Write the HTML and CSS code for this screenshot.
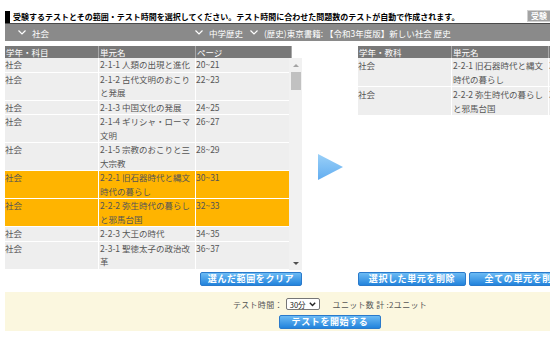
FILE: index.html
```html
<!DOCTYPE html>
<html lang="ja">
<head>
  <meta charset="UTF-8">
  <title>テスト作成</title>
  <link rel="stylesheet" href="styles.css">
</head>
<body>

  <div class="page">

    <div class="notice">
      <p>受験するテストとその範囲・テスト時間を選択してください。テスト時間に合わせた問題数のテストが自動で作成されます。</p>
      <button class="history-btn">受験</button>
    </div>

    <div class="filter-bar">
      <span class="filter filter-subject">
        <svg width="8" height="5" viewBox="0 0 8 5"><polyline points="0.5,0.5 4,4 7.5,0.5" fill="none" stroke="#fff" stroke-width="1.2"/></svg>
        社会
      </span>
      <span class="filter filter-grade">
        <svg width="8" height="5" viewBox="0 0 8 5"><polyline points="0.5,0.5 4,4 7.5,0.5" fill="none" stroke="#fff" stroke-width="1.2"/></svg>
        中学歴史
      </span>
      <span class="filter">
        <svg width="8" height="5" viewBox="0 0 8 5"><polyline points="0.5,0.5 4,4 7.5,0.5" fill="none" stroke="#fff" stroke-width="1.2"/></svg>
        (歴史)東京書籍: 【令和3年度版】新しい社会 歴史
      </span>
    </div>

    <div class="picker">

      <div class="panel">
        <div class="thead">
          <span class="c1">学年・科目</span>
          <span class="c2">単元名</span>
          <span class="c3">ページ</span>
        </div>
        <div class="scroll-box">
          <div class="rows" id="unit-list"></div>
          <div class="scrollbar">
            <div class="sb-up"><i></i></div>
            <div class="sb-thumb"></div>
            <div class="sb-down"><i></i></div>
          </div>
        </div>
        <div class="actions actions-right">
          <button class="blue-btn clear-btn">選んだ範囲をクリア</button>
        </div>
      </div>

      <div class="arrow">
        <svg width="27" height="26" viewBox="0 0 27 26">
          <defs>
            <linearGradient id="arrowFill" x1="0" y1="0" x2="0" y2="1">
              <stop offset="0" stop-color="#9ad0f8"/>
              <stop offset="1" stop-color="#62adf0"/>
            </linearGradient>
          </defs>
          <polygon points="1,0 26,13 1,26" fill="url(#arrowFill)"/>
        </svg>
      </div>

      <div class="panel">
        <div class="thead thead-wide">
          <span class="c1">学年・教科</span>
          <span class="c2">単元名</span>
          <span class="c3">ページ</span>
        </div>
        <div class="scroll-box">
          <div class="rows selected" id="selected-list"></div>
        </div>
        <div class="actions">
          <button class="blue-btn remove-btn">選択した単元を削除</button>
          <button class="blue-btn remove-btn">全ての単元を削除</button>
        </div>
      </div>

    </div>

    <div class="start-box">
      <div class="start-row">
        <span>テスト時間：</span>
        <span class="time-select">30分
          <svg width="7" height="5" viewBox="0 0 7 5"><polyline points="0.8,0.8 3.5,3.5 6.2,0.8" fill="none" stroke="#222" stroke-width="1.4"/></svg>
        </span>
        <span>ユニット数 計 :2ユニット</span>
      </div>
      <button class="blue-btn start-btn">テストを開始する</button>
    </div>

  </div>

  <script>
    const units = [
      { subject: '社会', name: '2-1-1 人類の出現と進化', page: '20~21' },
      { subject: '社会', name: '2-1-2 古代文明のおこりと発展', page: '22~23' },
      { subject: '社会', name: '2-1-3 中国文化の発展', page: '24~25' },
      { subject: '社会', name: '2-1-4 ギリシャ・ローマ文明', page: '26~27' },
      { subject: '社会', name: '2-1-5 宗教のおこりと三大宗教', page: '28~29' },
      { subject: '社会', name: '2-2-1 旧石器時代と縄文時代の暮らし', page: '30~31', picked: true },
      { subject: '社会', name: '2-2-2 弥生時代の暮らしと邪馬台国', page: '32~33', picked: true },
      { subject: '社会', name: '2-2-3 大王の時代', page: '34~35' },
      { subject: '社会', name: '2-3-1 聖徳太子の政治改革', page: '36~37' }
    ];

    const unitList = document.getElementById('unit-list');
    const selectedList = document.getElementById('selected-list');

    function rowHtml(unit, cls) {
      return `
        <div class="row ${cls}">
          <span class="c1">${unit.subject}</span>
          <span class="c2">${unit.name}</span>
          <span class="c3">${unit.page}</span>
        </div>`;
    }

    units.forEach(unit => {
      unitList.innerHTML += rowHtml(unit, unit.picked ? 'picked' : '');
      if (unit.picked) {
        selectedList.innerHTML += rowHtml(unit, '');
      }
    });
  </script>

</body>
</html>
```

FILE: styles.css
```css
* {
  box-sizing: border-box;
}

body {
  margin: 0;
  background: #fff;
  color: #555;
  font-family: "Noto Sans CJK JP", "Noto Sans", sans-serif;
  overflow: hidden;
}

.page {
  width: 650px;
  margin-left: 5px;
  padding-top: 11px;
}

/* notice line */
.notice {
  display: flex;
  align-items: flex-end;
  height: 12px;
}

.notice p {
  width: 522px;
  height: 12px;
  margin: 0;
  padding-left: 3px;
  border-left: 5px solid #000;
  color: #000;
  font-size: 8px;
  font-weight: bold;
  line-height: 11px;
}

.history-btn {
  height: 12px;
  margin-bottom: 1px;
  padding: 0 3px;
  background: #a3a3a3;
  border: 1px solid #d0d0d0;
  color: #fff;
  font-family: inherit;
  font-size: 8px;
  font-weight: bold;
  line-height: 10px;
}

/* filter bar */
.filter-bar {
  display: flex;
  align-items: center;
  height: 18px;
  padding-left: 13px;
  background: #8a8a8a;
  border-top: 1px solid #4a4a4a;
  color: #fff;
  font-size: 8.5px;
}

.filter {
  display: flex;
  align-items: center;
  gap: 6px;
}

.filter-subject {
  width: 177px;
}

.filter-grade {
  width: 55px;
}

/* unit picker */
.picker {
  display: flex;
  margin-top: 5px;
}

.panel {
  width: 297px;
  flex-shrink: 0;
}

.thead {
  display: flex;
  width: 287px;
  height: 12px;
  background: #787878;
  color: #fff;
  font-size: 8.5px;
  line-height: 12px;
}

.thead-wide {
  width: 297px;
}

.thead span {
  padding-left: 1px;
  border-right: 1px solid #a8a8a8;
  white-space: nowrap;
  overflow: hidden;
}

.c1 {
  width: 94px;
  flex-shrink: 0;
}

.c2 {
  width: 97px;
  flex-shrink: 0;
}

.c3 {
  flex: 1;
}

.scroll-box {
  display: flex;
  height: 212px;
}

.rows {
  flex: 1;
  overflow: hidden;
}

.row {
  display: flex;
  background: #eee;
  border-bottom: 1px solid #fff;
  font-size: 8.5px;
  line-height: 13.5px;
}

.row.picked {
  background: #ffb400;
}

.selected .row {
  line-height: 14px;
}

.row span {
  border-right: 1px solid #fff;
}

.row .c2 {
  padding-left: 1px;
}

.row .c3 {
  border-right: none;
}

/* fake scrollbar */
.scrollbar {
  display: flex;
  flex-direction: column;
  width: 13px;
  background: #f1f1f1;
}

.sb-up,
.sb-down {
  display: flex;
  align-items: center;
  justify-content: center;
  height: 14px;
}

.sb-up i {
  border-left: 3px solid transparent;
  border-right: 3px solid transparent;
  border-bottom: 3px solid #a3a3a3;
}

.sb-down {
  margin-top: auto;
}

.sb-down i {
  border-left: 3px solid transparent;
  border-right: 3px solid transparent;
  border-top: 3px solid #505050;
}

.sb-thumb {
  height: 18px;
  margin: 0 1px 0 2px;
  background: #c1c1c1;
}

.arrow {
  display: flex;
  align-items: center;
  justify-content: center;
  width: 56px;
  flex-shrink: 0;
  padding-top: 2px;
}

/* buttons */
.actions {
  display: flex;
  gap: 3px;
  margin-top: 2px;
}

.actions-right {
  justify-content: flex-end;
}

.blue-btn {
  height: 14px;
  padding: 0;
  background: linear-gradient(#6cbbf4, #2283dc);
  border: 1px solid #2a7acb;
  border-radius: 2px;
  color: #fff;
  font-family: inherit;
  font-size: 9px;
  font-weight: bold;
  line-height: 12px;
  letter-spacing: 0.6px;
  white-space: nowrap;
  cursor: pointer;
}

.clear-btn {
  width: 102px;
}

.remove-btn {
  width: 108px;
}

/* start area */
.start-box {
  display: flex;
  flex-direction: column;
  align-items: center;
  gap: 4px;
  height: 39px;
  margin-top: 6px;
  padding-top: 5px;
  background: #fbf7df;
}

.start-row {
  display: flex;
  align-items: center;
  height: 14px;
  font-size: 8px;
  color: #555;
  letter-spacing: 0.3px;
}

.time-select {
  display: flex;
  align-items: center;
  gap: 3px;
  height: 12px;
  margin: 0 13px 0 3px;
  padding: 0 3px;
  background: #fff;
  border: 1px solid #767676;
  border-radius: 2px;
  color: #222;
  font-size: 7.5px;
  letter-spacing: 0;
}

.start-btn {
  width: 102px;
}
```
